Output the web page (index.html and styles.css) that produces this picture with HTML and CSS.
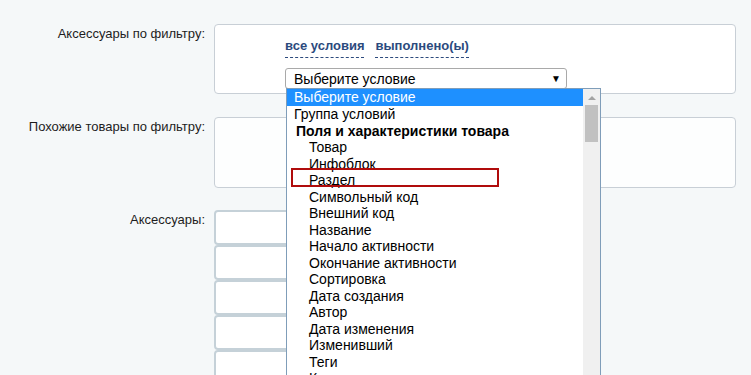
FILE: index.html
```html
<!DOCTYPE html>
<html>
<head>
    <title>Свойства товара</title>
    <link rel="stylesheet" href="styles.css">
</head>
<body>
    <div class="form">
        <div class="row">
            <div class="label">Аксессуары по фильтру:</div>
            <div class="field">
                <div class="box box-cond">
                    <div class="cond-links">
                        <a class="dash-link" href="#">все условия</a>
                        <a class="dash-link" href="#">выполнено(ы)</a>
                    </div>
                    <div class="select-wrap">
                        <div class="select">
                            <span>Выберите условие</span>
                            <span class="arrow">&#9660;</span>
                        </div>
                        <div class="listbox">
                            <div class="options">
                                <div class="opt selected">Выберите условие</div>
                                <div class="opt">Группа условий</div>
                                <div class="opt group">Поля и характеристики товара</div>
                                <div class="opt child">Товар</div>
                                <div class="opt child">Инфоблок</div>
                                <div class="opt child marked">Раздел</div>
                                <div class="opt child">Символьный код</div>
                                <div class="opt child">Внешний код</div>
                                <div class="opt child">Название</div>
                                <div class="opt child">Начало активности</div>
                                <div class="opt child">Окончание активности</div>
                                <div class="opt child">Сортировка</div>
                                <div class="opt child">Дата создания</div>
                                <div class="opt child">Автор</div>
                                <div class="opt child">Дата изменения</div>
                                <div class="opt child">Изменивший</div>
                                <div class="opt child">Теги</div>
                                <div class="opt child">Код</div>
                            </div>
                            <div class="scrollbar">
                                <div class="scroll-up"></div>
                                <div class="thumb"></div>
                            </div>
                        </div>
                    </div>
                </div>
            </div>
        </div>

        <div class="row">
            <div class="label">Похожие товары по фильтру:</div>
            <div class="field">
                <div class="box box-empty"></div>
            </div>
        </div>

        <div class="row">
            <div class="label">Аксессуары:</div>
            <div class="field stack">
                <div class="input"></div>
                <div class="input"></div>
                <div class="input"></div>
                <div class="input"></div>
                <div class="input"></div>
            </div>
        </div>
    </div>
</body>
</html>
```

FILE: styles.css
```css
body {
    margin: 0;
    background: #f5f8f9;
    font-family: "Liberation Sans", Arial, sans-serif;
    font-size: 13px;
    color: #1d1d1d;
}

.form {
    padding-top: 24px;
}

.row {
    display: flex;
    margin-bottom: 23px;
}

.row:last-child {
    margin-top: -1px;
}

.label {
    width: 214px;
    flex: none;
    text-align: right;
    padding-right: 9px;
    box-sizing: border-box;
    padding-top: 2px;
}

.field {
    width: 522px;
}

.box {
    background: #fff;
    border: 1px solid #c8cfd6;
    border-radius: 4px;
    box-sizing: border-box;
}

.box-cond {
    height: 70px;
    padding: 13px 0 0 70px;
}

.box-empty {
    height: 71px;
    background: #fdfefe;
}

.cond-links {
    display: flex;
    gap: 11px;
    height: 30px;
}

.dash-link {
    color: #2c4a7d;
    font-weight: bold;
    text-decoration: none;
    border-bottom: 1px dashed #2c4a7d;
    height: 19px;
}

.select-wrap {
    position: relative;
    width: 282px;
}

.select {
    display: flex;
    justify-content: space-between;
    align-items: center;
    height: 21px;
    box-sizing: border-box;
    border: 1px solid #a9a9a9;
    border-radius: 3px;
    padding: 0 5px 0 8px;
    font-size: 14px;
    color: #000;
    background: #fff;
}

.arrow {
    font-size: 10px;
}

/* opened list of the select, over the rows below */
.listbox {
    position: absolute;
    left: 1px;
    top: 20px;
    width: 313px;
    height: 300px;
    border: 1px solid #7f9db9;
    background: #fff;
    display: flex;
    z-index: 2;
}

.options {
    flex: 1;
    font-size: 14px;
    color: #000;
}

.opt {
    height: 16.5px;
    line-height: 16.5px;
    padding-left: 7px;
    white-space: nowrap;
    box-sizing: border-box;
}

.opt.selected {
    background: #1e90ff;
    color: #fff;
    height: 17px;
}

.opt.group {
    font-weight: bold;
    padding-left: 9px;
}

.opt.child {
    padding-left: 22px;
}

.opt.marked {
    position: relative;
}

.opt.marked::after {
    content: "";
    position: absolute;
    left: 4px;
    top: -4px;
    width: 208px;
    height: 19px;
    box-sizing: border-box;
    border: 2px solid #b00c0c;
}

.scrollbar {
    width: 17px;
    background: #f0f0f0;
    display: flex;
    flex-direction: column;
    align-items: center;
}

.scroll-up {
    width: 0;
    height: 0;
    margin: 7px 0 5px;
    border-left: 4px solid transparent;
    border-right: 4px solid transparent;
    border-bottom: 4px solid #a3a3a3;
}

.thumb {
    width: 13px;
    height: 37px;
    background: #c1c1c1;
}

.stack {
    display: flex;
    flex-direction: column;
}

.input {
    width: 300px;
    height: 35px;
    box-sizing: border-box;
    background: #fff;
    border: 2px solid #c5d1d8;
    border-radius: 4px;
}
```
